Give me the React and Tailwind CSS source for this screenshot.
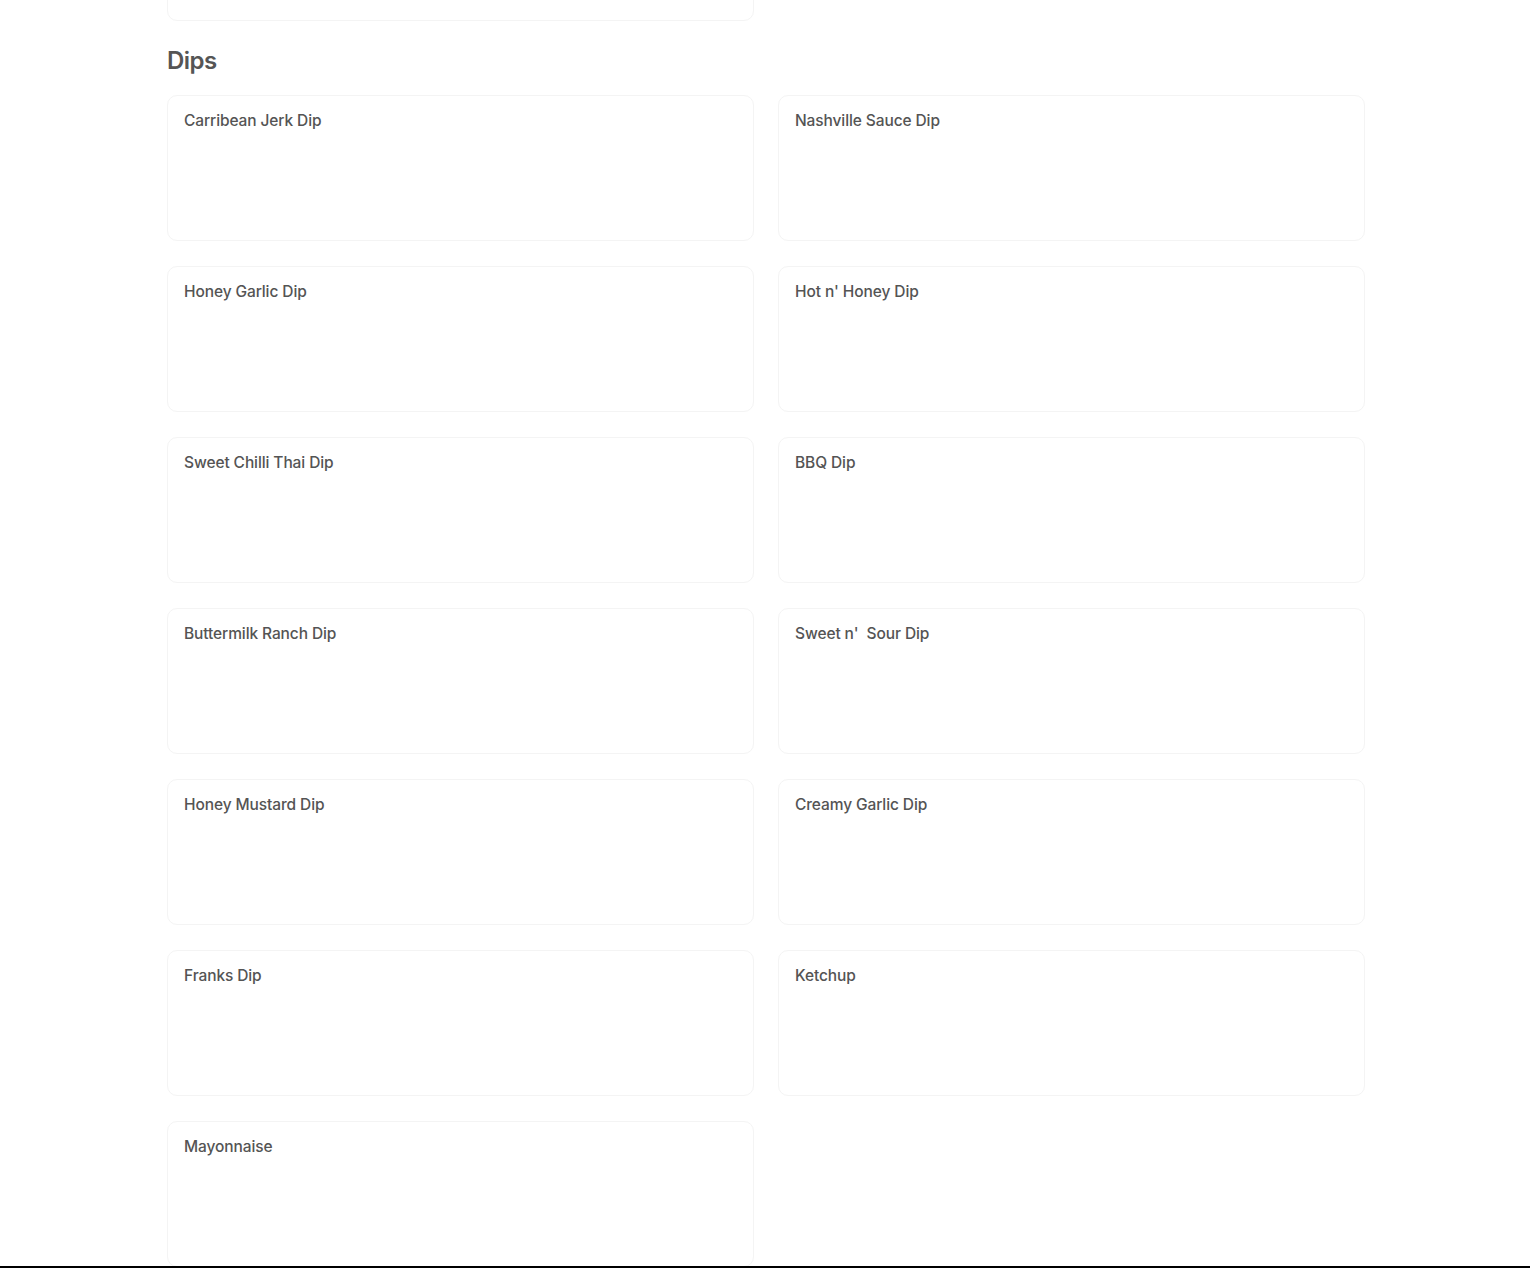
import React from "react";

const dips = [
  "Carribean Jerk Dip",
  "Nashville Sauce Dip",
  "Honey Garlic Dip",
  "Hot n' Honey Dip",
  "Sweet Chilli Thai Dip",
  "BBQ Dip",
  "Buttermilk Ranch Dip",
  "Sweet n'\u00a0 Sour Dip",
  "Honey Mustard Dip",
  "Creamy Garlic Dip",
  "Franks Dip",
  "Ketchup",
  "Mayonnaise",
];

function Card({ title }) {
  return (
    <div className="h-[146px] rounded-[10px] border border-[#f4f4f4] bg-white px-[16px] pt-[15px]">
      {title && (
        <div className="text-[15.5px] leading-[20px] font-medium tracking-[-0.1px] text-[#545454]">{title}</div>
      )}
    </div>
  );
}

export default function App() {
  return (
    <div
      className="h-[1268px] overflow-hidden border-b-2 border-black bg-white"
      style={{ fontFamily: "Inter, 'Noto Sans', sans-serif" }}
    >
      <div className="ml-[167px] w-[1198px]">
        <div className="grid grid-cols-2 gap-x-[24px] -mt-[125px]">
          <Card />
        </div>
        <h2 className="mt-[24px] mb-[18px] text-[24px] leading-[32px] font-semibold tracking-[-0.5px] text-[#555555]">
          Dips
        </h2>
        <div className="grid grid-cols-2 gap-x-[24px] gap-y-[25px]">
          {dips.map((d) => (
            <Card key={d} title={d} />
          ))}
        </div>
      </div>
    </div>
  );
}
